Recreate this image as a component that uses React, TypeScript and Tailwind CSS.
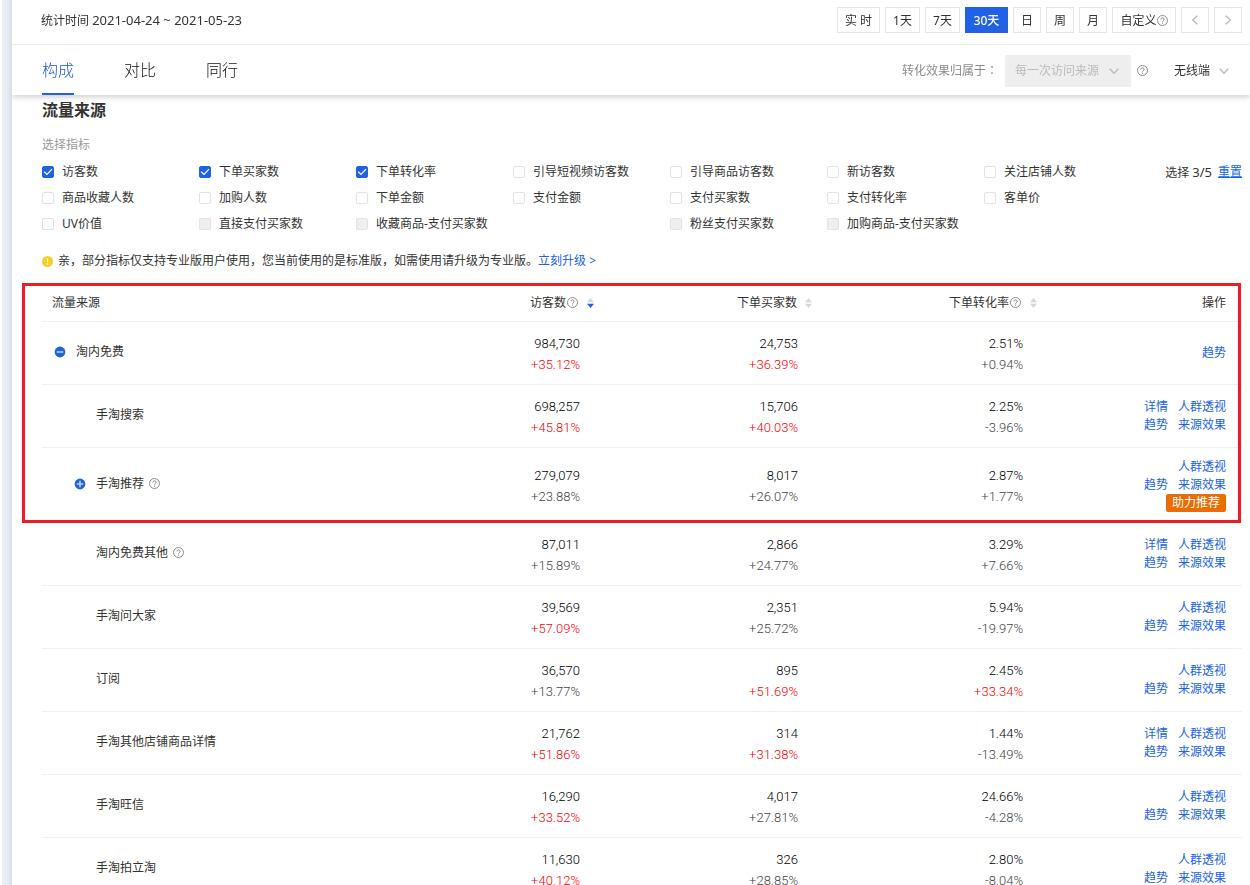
import { useState } from "react";

type Metric = { label: string; checked?: boolean; disabled?: boolean } | null;

const METRICS: Metric[] = [
  { label: "访客数", checked: true },
  { label: "下单买家数", checked: true },
  { label: "下单转化率", checked: true },
  { label: "引导短视频访客数" },
  { label: "引导商品访客数" },
  { label: "新访客数" },
  { label: "关注店铺人数" },
  { label: "商品收藏人数" },
  { label: "加购人数" },
  { label: "下单金额" },
  { label: "支付金额" },
  { label: "支付买家数" },
  { label: "支付转化率" },
  { label: "客单价" },
  { label: "UV价值" },
  { label: "直接支付买家数", disabled: true },
  { label: "收藏商品-支付买家数", disabled: true },
  null,
  { label: "粉丝支付买家数", disabled: true },
  { label: "加购商品-支付买家数", disabled: true },
];

type Cell = [value: string, change: string];
type Row = {
  name: string;
  root?: boolean;
  toggle?: "minus" | "plus";
  help?: boolean;
  cells: Cell[];
  actions: string[][];
  boost?: boolean;
};

const FULL = [["详情", "人群透视"], ["趋势", "来源效果"]];
const SHORT = [["人群透视"], ["趋势", "来源效果"]];

const ROWS: Row[] = [
  { name: "淘内免费", root: true, toggle: "minus", cells: [["984,730", "+35.12%"], ["24,753", "+36.39%"], ["2.51%", "+0.94%"]], actions: [["趋势"]] },
  { name: "手淘搜索", cells: [["698,257", "+45.81%"], ["15,706", "+40.03%"], ["2.25%", "-3.96%"]], actions: FULL },
  { name: "手淘推荐", toggle: "plus", help: true, cells: [["279,079", "+23.88%"], ["8,017", "+26.07%"], ["2.87%", "+1.77%"]], actions: SHORT, boost: true },
  { name: "淘内免费其他", help: true, cells: [["87,011", "+15.89%"], ["2,866", "+24.77%"], ["3.29%", "+7.66%"]], actions: FULL },
  { name: "手淘问大家", cells: [["39,569", "+57.09%"], ["2,351", "+25.72%"], ["5.94%", "-19.97%"]], actions: SHORT },
  { name: "订阅", cells: [["36,570", "+13.77%"], ["895", "+51.69%"], ["2.45%", "+33.34%"]], actions: SHORT },
  { name: "手淘其他店铺商品详情", cells: [["21,762", "+51.86%"], ["314", "+31.38%"], ["1.44%", "-13.49%"]], actions: FULL },
  { name: "手淘旺信", cells: [["16,290", "+33.52%"], ["4,017", "+27.81%"], ["24.66%", "-4.28%"]], actions: SHORT },
  { name: "手淘拍立淘", cells: [["11,630", "+40.12%"], ["326", "+28.85%"], ["2.80%", "-8.04%"]], actions: SHORT },
];

// Changes above this threshold are drawn in red.
const ALERT = 30;

function Help() {
  return (
    <svg className="size-[11px] shrink-0 text-[#8c8c8c]" viewBox="0 0 11 11" fill="none" stroke="currentColor" aria-hidden="true">
      <circle cx="5.5" cy="5.5" r="5" />
      <path d="M3.9 4.5a1.6 1.6 0 1 1 2.4 1.3c-.5.3-.8.5-.8 1" />
      <path d="M5.5 7.6v1.1" />
    </svg>
  );
}

function Chevron({ className }: { className: string }) {
  return (
    <svg className={className} viewBox="0 0 10 10" fill="none" stroke="currentColor" strokeWidth="1.4" aria-hidden="true">
      <path d="M.7 2.7 5 7.3l4.3-4.6" />
    </svg>
  );
}

function Sorter({ active }: { active?: boolean }) {
  return (
    <svg className="h-[10px] w-[7px] shrink-0" viewBox="0 0 7 10" aria-hidden="true">
      <path d="M3.5 0 7 4.3H0z" fill="#cfd9e3" />
      <path d="M3.5 10 0 5.7h7z" fill={active ? "#2062e6" : "#cfd9e3"} />
    </svg>
  );
}

function Toggle({ kind }: { kind: "minus" | "plus" }) {
  return (
    <button type="button" aria-label={kind === "minus" ? "收起" : "展开"} className="size-3 shrink-0">
      <svg viewBox="0 0 12 12" className="size-3" aria-hidden="true">
        <circle cx="6" cy="6" r="5.4" fill="#2062e6" />
        <path d={kind === "minus" ? "M2.7 6h6.6" : "M2.7 6h6.6M6 2.7v6.6"} stroke="#fff" strokeWidth="1.1" />
      </svg>
    </button>
  );
}

const RANGES = ["实 时", "1天", "7天", "30天", "日", "周", "月"];
const RANGE_WIDTHS = ["w-[43px]", "w-[35px]", "w-[35px]", "w-[43px]", "w-7", "w-7", "w-7"];

function MetricBox({ metric }: { metric: NonNullable<Metric> }) {
  const [on, setOn] = useState(Boolean(metric.checked));
  return (
    <label className="flex h-[26px] items-center gap-2 whitespace-nowrap">
      <span className="grid shrink-0">
        <input
          type="checkbox"
          checked={on}
          disabled={metric.disabled}
          onChange={(e) => setOn(e.target.checked)}
          className="col-start-1 row-start-1 size-3 appearance-none rounded-xs border border-[#e2e2e2] bg-white checked:border-[#2062e6] checked:bg-[#2062e6] disabled:bg-[#efefef] disabled:opacity-100"
        />
        {on && (
          <svg className="pointer-events-none col-start-1 row-start-1 size-3" viewBox="0 0 12 12" fill="none" stroke="#fff" strokeWidth="1.2" aria-hidden="true">
            <path d="M2.2 5.8 5 8.5l5-5.3" />
          </svg>
        )}
      </span>
      {metric.label}
    </label>
  );
}

export default function App() {
  const [range, setRange] = useState("30天");
  const [tab, setTab] = useState("构成");

  return (
    <div className="flex h-screen overflow-hidden bg-white pl-0.5 font-['Noto_Sans','Noto_Sans_CJK_SC',sans-serif] text-xs leading-[18px] text-[#333]">
      <div className="w-2.5 shrink-0 bg-linear-to-r from-[#e9edf4] from-50% to-[#d8dce3]" />
      <main className="min-w-0 flex-1 overflow-y-auto [scrollbar-width:none]">
        <header className="sticky top-0 z-10 bg-white shadow-[0_2px_6px_rgba(0,0,0,0.2)]">
          <div className="flex h-[45px] items-center justify-between border-b border-[#ebebeb] pr-2 pb-1 pl-[29px]">
            <p>
              统计时间 <span className="text-[13px]">2021-04-24 ~ 2021-05-23</span>
            </p>
            <div className="flex gap-[5px]">
              {RANGES.map((r, i) => (
                <button
                  key={r}
                  type="button"
                  onClick={() => setRange(r)}
                  className={`${RANGE_WIDTHS[i]} h-[26px] border pt-px ${
                    r === range ? "border-[#2062e6] bg-[#2062e6] font-medium text-white" : "border-[#e5e5e5] bg-white"
                  }`}
                >
                  {r}
                </button>
              ))}
              <button type="button" className="flex h-[26px] w-16 items-center justify-center border border-[#e5e5e5] pt-px">
                自定义
                <Help />
              </button>
              <button type="button" aria-label="上一页" className="flex h-[26px] w-7 items-center justify-center border border-[#e5e5e5] text-[#bbb]">
                <Chevron className="size-[10px] rotate-90" />
              </button>
              <button type="button" aria-label="下一页" className="flex h-[26px] w-7 items-center justify-center border border-[#e5e5e5] text-[#bbb]">
                <Chevron className="size-[10px] -rotate-90" />
              </button>
            </div>
          </div>
          <div className="flex h-[50px] items-center justify-between pr-3 pl-[30px]">
            <nav className="flex gap-[50px] self-stretch">
              {["构成", "对比", "同行"].map((t) => (
                <button
                  key={t}
                  type="button"
                  onClick={() => setTab(t)}
                  className={`border-b-2 pt-0.5 text-base font-light ${t === tab ? "border-[#2062e6] text-[#1a56d6]" : "border-transparent text-[#111]"}`}
                >
                  {t}
                </button>
              ))}
            </nav>
            <div className="flex items-center pt-px">
              <label htmlFor="attribution" className="mr-[7px] text-[#8c8c8c]">
                转化效果归属于<span className="font-['Noto_Sans_CJK_TC',sans-serif]">：</span>
              </label>
              <div className="relative">
                <select id="attribution" disabled className="h-8 w-[126px] appearance-none rounded-xs bg-[#eee] pl-[10px] text-[#bbb] disabled:opacity-100">
                  <option>每一次访问来源</option>
                </select>
                <Chevron className="pointer-events-none absolute top-[11px] right-3 size-[10px] text-[#bbb]" />
              </div>
              <span className="ml-1.5">
                <Help />
              </span>
              <div className="relative ml-4">
                <select aria-label="终端" className="h-8 w-[74px] appearance-none pl-[10px]">
                  <option>无线端</option>
                </select>
                <Chevron className="pointer-events-none absolute top-[11px] right-[9px] size-[10px] text-[#bbb]" />
              </div>
            </div>
          </div>
        </header>

        <section className="pr-2 pb-6 pl-[30px]">
          <h2 className="h-[30px] text-base leading-[30px] font-bold">流量来源</h2>
          <h3 className="mt-[11px] text-[#999]">选择指标</h3>
          <div className="mt-[5px] flex">
            <div className="grid flex-1 grid-cols-7">
              {METRICS.map((m, i) => (m ? <MetricBox key={m.label} metric={m} /> : <span key={i} />))}
            </div>
            <p className="ml-[22px] flex h-[26px] w-[79px] items-center justify-end gap-1.5 whitespace-nowrap">
              <span>
                选择 <span className="text-[13px]">3/5</span>
              </span>
              <button type="button" className="text-[#2062e6] underline">
                重置
              </button>
            </p>
          </div>

          <p className="mt-[15px] flex items-center">
            <svg className="mr-[5px] size-[11px]" viewBox="0 0 11 11" aria-hidden="true">
              <circle cx="5.5" cy="5.5" r="5.5" fill="#f3cf2a" />
              <path d="M5.5 2.3v4M5.5 7.4v1.3" stroke="#fff" strokeWidth="1.3" />
            </svg>
            亲，部分指标仅支持专业版用户使用，您当前使用的是标准版，如需使用请升级为专业版。
            <a href="#upgrade" className="text-[#2062e6]">
              立刻升级 &gt;
            </a>
          </p>

          <div className="relative mt-[13px]">
            <table className="w-full table-fixed border-collapse">
              <colgroup>
                <col />
                <col className="w-[218px]" />
                <col className="w-[218px]" />
                <col className="w-[225px]" />
                <col className="w-[201px]" />
              </colgroup>
              <thead>
                <tr className="h-[38px] border-b border-[#f0f0f0]">
                  <th className="pt-0.5 pl-[10px] text-left font-normal">流量来源</th>
                  <th className="pt-0.5 pr-1 font-normal">
                    <div className="flex items-center justify-end gap-px">
                      访客数
                      <Help />
                      <span className="pl-2"><Sorter active /></span>
                    </div>
                  </th>
                  <th className="pt-0.5 pr-1 font-normal">
                    <div className="flex items-center justify-end">
                      下单买家数
                      <span className="pl-2"><Sorter /></span>
                    </div>
                  </th>
                  <th className="pt-0.5 pr-1 font-normal">
                    <div className="flex items-center justify-end gap-px">
                      下单转化率
                      <Help />
                      <span className="pl-2"><Sorter /></span>
                    </div>
                  </th>
                  <th className="pt-0.5 pr-4 text-right font-normal">操作</th>
                </tr>
              </thead>
              <tbody>
                {ROWS.map((row) => (
                  <tr key={row.name} className="border-b border-[#f0f0f0]">
                    <td className={row.root ? "pl-3" : "pl-8"}>
                      <div className="flex items-center pb-0.5">
                        {row.toggle ? <Toggle kind={row.toggle} /> : <span className="w-3" />}
                        <span className="ml-[10px] mr-[5px]">{row.name}</span>
                        {row.help && <Help />}
                      </div>
                    </td>
                    {row.cells.map(([value, change], i) => (
                      <td key={i} className="pt-[11px] pr-[18px] pb-[9px] text-right font-['Roboto',sans-serif] text-[13px] leading-[21px] font-light">
                        <div className="text-black">{value}</div>
                        <div className={parseFloat(change) > ALERT ? "text-[#ff0000]" : "text-[#444]"}>{change}</div>
                      </td>
                    ))}
                    <td className="py-[10px] pr-4">
                      {row.actions.map((line, i) => (
                        <div key={i} className="flex justify-end gap-[10px]">
                          {line.map((a) => (
                            <a key={a} href="#detail" className="text-[#2062e6]">
                              {a}
                            </a>
                          ))}
                        </div>
                      ))}
                      {row.boost && (
                        <button type="button" className="ml-auto block w-[60px] rounded-xs bg-[#eb6c00] text-white">
                          助力推荐
                        </button>
                      )}
                    </td>
                  </tr>
                ))}
              </tbody>
            </table>
            <div className="pointer-events-none absolute top-0 right-px -left-5 h-60 border-3 border-[#ee1c25]" />
          </div>
        </section>
      </main>
    </div>
  );
}
